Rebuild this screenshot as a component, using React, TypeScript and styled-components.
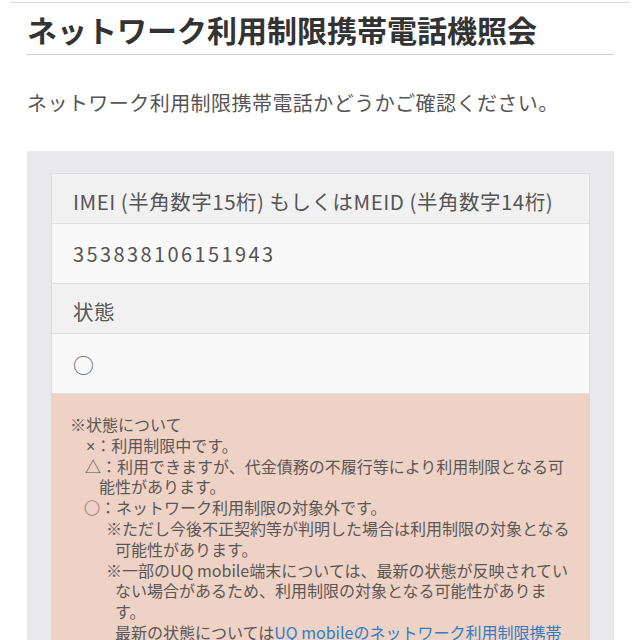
import React from "react";
import styled, { createGlobalStyle } from "styled-components";

const GlobalStyle = createGlobalStyle`
  html, body {
    margin: 0;
    padding: 0;
    background: #ffffff;
  }
  body {
    font-family: "Noto Sans CJK JP", "Noto Sans", sans-serif;
    color: #555;
  }
  * { box-sizing: border-box; }
`;

const TopRule = styled.div`
  margin: 2px 10px 0;
  border-top: 1px solid #dcdcdc;
`;

const Page = styled.main`
  padding: 0 26px 0 27px;
`;

const Title = styled.h1`
  margin: 0;
  padding: 6px 0 5px;
  font-size: 30px;
  line-height: 40px;
  font-weight: 700;
  color: #333;
  border-bottom: 1px solid #cfcfcf;
`;

const Lead = styled.p`
  margin: 33px 0 33px;
  font-size: 20px;
  line-height: 30px;
  letter-spacing: 0.45px;
  color: #555;
`;

const Panel = styled.section`
  background: #e9e9eb;
  padding: 22px 24px 40px;
`;

const Card = styled.div`
  border: 1px solid #dedede;
  border-bottom: none;
`;

const FieldLabel = styled.div`
  height: 50px;
  padding: 12px 21px 7px;
  background: #f1f1f1;
  border-bottom: 1px solid #dedede;
  font-size: 20.5px;
  line-height: 30px;
  letter-spacing: 0.5px;
  color: #555;
  white-space: nowrap;
`;

const FieldValue = styled.div`
  height: 60px;
  padding: 0 21px;
  display: flex;
  align-items: center;
  background: #f9f9f9;
  border-bottom: 1px solid #dedede;
  font-size: 20px;
  color: #555;
`;

const Digits = styled.span`
  letter-spacing: 2.4px;
`;

const Status = styled.span`
  font-size: 21px;
  color: #666;
`;

const Notes = styled.div`
  background: #efd2c6;
  padding: 20px 15px 20px 19px;
  font-size: 16px;
  line-height: 20.8px;
  color: #5a5655;
`;

const NoteLine = styled.p<{ $indent: number; $hang: number }>`
  margin: 0;
  padding-left: ${(p) => p.$indent + p.$hang}px;
  text-indent: -${(p) => p.$hang}px;
`;

const Cross = styled.span`
  font-family: "Liberation Sans", sans-serif;
  font-size: 16px;
  line-height: 0;
`;

const Link = styled.a`
  color: #2f7cc4;
  text-decoration: underline;
`;

export default function App() {
  return (
    <>
      <GlobalStyle />
      <TopRule />
      <Page>
        <Title>ネットワーク利用制限携帯電話機照会</Title>
        <Lead>ネットワーク利用制限携帯電話かどうかご確認ください。</Lead>
        <Panel>
          <Card>
            <FieldLabel>IMEI (半角数字15桁) もしくはMEID (半角数字14桁)</FieldLabel>
            <FieldValue>
              <Digits>353838106151943</Digits>
            </FieldValue>
            <FieldLabel>状態</FieldLabel>
            <FieldValue>
              <Status>○</Status>
            </FieldValue>
          </Card>
          <Notes>
            <NoteLine $indent={0} $hang={0}>※状態について</NoteLine>
            <NoteLine $indent={16} $hang={0}>
              <Cross>×</Cross>：利用制限中です。
            </NoteLine>
            <NoteLine $indent={15} $hang={14}>
              △：利用できますが、代金債務の不履行等により利用制限となる可能性があります。
            </NoteLine>
            <NoteLine $indent={14} $hang={0}>○：ネットワーク利用制限の対象外です。</NoteLine>
            <NoteLine $indent={36} $hang={9}>
              ※ただし今後不正契約等が判明した場合は利用制限の対象となる可能性があります。
            </NoteLine>
            <NoteLine $indent={36} $hang={9}>
              ※一部のUQ mobile端末については、最新の状態が反映されていない場合があるため、利用制限の対象となる可能性があります。
            </NoteLine>
            <NoteLine $indent={45} $hang={0}>
              最新の状態については
              <Link href="#">UQ mobileのネットワーク利用制限携帯電話機照会</Link>
              をご確認ください。
            </NoteLine>
          </Notes>
        </Panel>
      </Page>
    </>
  );
}
